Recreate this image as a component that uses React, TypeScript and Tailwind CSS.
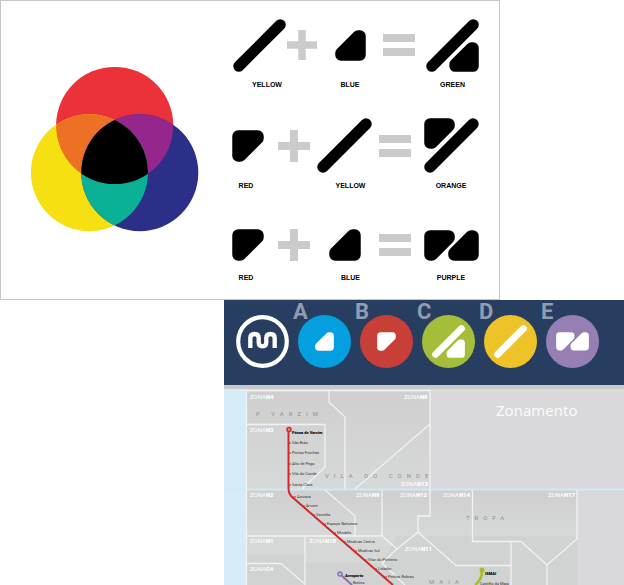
import React from "react";

type Shape = "slash" | "lower" | "upper" | "green" | "orange" | "purple";

const UPPER = "M6 6 H25 V8 L8 25 H6 Z";
const LOWER = "M25 25 V6 H23 L6 23 V25 Z";
const SLASH = "M6 49 L49 6";

const GLYPHS: Record<Shape, { w: number; h: number; parts: { d: string; t?: string }[] }> = {
  slash: { w: 55, h: 55, parts: [{ d: SLASH }] },
  lower: { w: 31, h: 31, parts: [{ d: LOWER }] },
  upper: { w: 31, h: 31, parts: [{ d: UPPER }] },
  green: { w: 55, h: 55, parts: [{ d: SLASH }, { d: LOWER, t: "translate(24 24)" }] },
  orange: { w: 55, h: 55, parts: [{ d: UPPER }, { d: SLASH }] },
  purple: { w: 55, h: 31, parts: [{ d: UPPER }, { d: LOWER, t: "translate(24 0)" }] },
};

function Glyph({ shape, className }: { shape: Shape; className: string }) {
  const g = GLYPHS[shape];
  return (
    <svg viewBox={`0 0 ${g.w} ${g.h}`} className={className} aria-hidden="true">
      {g.parts.map((p, i) => (
        <path
          key={i}
          d={p.d}
          transform={p.t}
          fill="currentColor"
          stroke="currentColor"
          strokeWidth="11.5"
          strokeLinejoin="round"
          strokeLinecap="round"
        />
      ))}
    </svg>
  );
}

function Term({
  shape,
  size,
  label,
  art,
  caption = "",
}: {
  shape: Shape;
  size: string;
  label: string;
  art: string;
  caption?: string;
}) {
  return (
    <figure className="flex flex-col items-center">
      <div className={`flex items-center ${art}`}>
        <Glyph shape={shape} className={size} />
      </div>
      <figcaption className={`text-[7px] leading-[14px] font-bold ${caption}`}>{label}</figcaption>
    </figure>
  );
}

function Plus({ art, size = "size-8" }: { art: string; size?: string }) {
  return (
    <div className={`flex items-center justify-end ${art}`}>
      <svg viewBox="0 0 32 32" className={`text-[#cbcbcb] ${size}`} aria-label="plus">
        <path d="M12 0h8v12h12v8h-12v12h-8v-12H0v-8h12z" fill="currentColor" />
      </svg>
    </div>
  );
}

function Equals({ art }: { art: string }) {
  return (
    <div className={`flex items-center justify-center ${art}`}>
      <div className="flex w-full flex-col gap-[6px]">
        <span className="h-2 bg-[#cbcbcb]" />
        <span className="h-2 bg-[#cbcbcb]" />
      </div>
    </div>
  );
}

function Venn() {
  return (
    <svg viewBox="30 66 170 168" className="w-[170px] shrink-0" role="img" aria-label="Colour mixing">
      <defs>
        <clipPath id="clip-red">
          <circle cx="114.7" cy="125.5" r="58.6" />
        </clipPath>
        <clipPath id="clip-blue">
          <circle cx="139.8" cy="172.7" r="58.5" />
        </clipPath>
      </defs>
      <circle cx="114.7" cy="125.5" r="58.6" fill="#eb3139" />
      <circle cx="89.4" cy="172.7" r="58.5" fill="#f6e011" />
      <circle cx="139.8" cy="172.7" r="58.5" fill="#2c2f88" />
      <g clipPath="url(#clip-red)">
        <circle cx="89.4" cy="172.7" r="58.5" fill="#ed7025" />
        <circle cx="139.8" cy="172.7" r="58.5" fill="#94268c" />
      </g>
      <g clipPath="url(#clip-blue)">
        <circle cx="89.4" cy="172.7" r="58.5" fill="#0ab194" />
        <g clipPath="url(#clip-red)">
          <circle cx="89.4" cy="172.7" r="58.5" fill="#000" />
        </g>
      </g>
    </svg>
  );
}

const LINES: { id: string; color: string; shape: Shape; size: string }[] = [
  { id: "A", color: "bg-[#049fdf]", shape: "lower", size: "w-[19px]" },
  { id: "B", color: "bg-[#c73f36]", shape: "upper", size: "w-[19px]" },
  { id: "C", color: "bg-[#a4be3a]", shape: "green", size: "w-[33px]" },
  { id: "D", color: "bg-[#eec229]", shape: "slash", size: "w-[33px]" },
  { id: "E", color: "bg-[#957fb3]", shape: "purple", size: "w-[33px]" },
];

const ZONES: [string, number, number][] = [
  ["N4", 250, 399],
  ["N8", 404, 399],
  ["N3", 250, 432],
  ["N13", 401, 486],
  ["N2", 250, 497],
  ["N9", 356, 497],
  ["N12", 400, 497],
  ["N14", 443, 497],
  ["N17", 548, 497],
  ["N1", 250, 543],
  ["N10", 309, 543],
  ["N11", 405, 551],
  ["C4", 250, 571],
];

const STOPS: [string, number, number][] = [
  ["São Brás", 292, 444],
  ["Portas Fronhas", 292, 454],
  ["Alto de Pega", 292, 465],
  ["Vila do Conde", 292, 475],
  ["Santa Clara", 292, 486],
  ["Azurara", 297, 498],
  ["Árvore", 306, 507],
  ["Varziela", 316, 516],
  ["Espaço Natureza", 327, 525],
  ["Mindelo", 337, 534],
  ["Modivas Centro", 347, 543],
  ["Modivas Sul", 358, 552],
  ["Vilar do Pinheiro", 368, 561],
  ["Lidador", 378, 570],
  ["Pedras Rubras", 388, 578],
];

const TOWNS: [string, number, number][] = [
  ["P VARZIM", 256, 416],
  ["VILA DO CONDE", 325, 478],
  ["TROFA", 466, 520],
  ["MAIA", 429, 584],
];

function ZoneMap() {
  return (
    <svg viewBox="224 389 400 196" className="block w-full bg-[#d9d8da]" role="img" aria-label="Zonamento">
      <defs>
        <linearGradient id="land" x1="0" y1="0" x2="0" y2="1">
          <stop offset="0" stopColor="#cecfce" />
          <stop offset="1" stopColor="#d7d8d8" />
        </linearGradient>
      </defs>
      <rect x="224" y="389" width="23" height="196" fill="#d5edf8" />
      <rect x="247" y="390" width="183" height="99" fill="url(#land)" />
      <rect x="247" y="490" width="330" height="46" fill="url(#land)" />
      <path d="M247 536H577V585H247Z" fill="#d1d2d2" />
      <path d="M247 536H305V555H247Z M305 536H397L382 563H305Z" fill="#d6d7d7" />
      <path d="M224 489.5H624" stroke="#d0eaf5" strokeWidth="2" />

      <g fill="none" stroke="#f1f3f3" strokeWidth="1.3" strokeLinejoin="round">
        <path d="M246.5 585V390.5H430V516H418V532L397 549L382 563L405 585" />
        <path d="M329 390V402L345 417V489" />
        <path d="M430 424L355 489" />
        <path d="M247 424.5H325V467L302 489" />
        <path d="M325 490L355 516V536" />
        <path d="M247 536H382L397 549" />
        <path d="M382 490V536" />
        <path d="M418 532L456 565.5H511" />
        <path d="M305 536V585" />
        <path d="M247 563.5H281L305 584" />
        <path d="M472.5 490V541.5H521L547 565V585" />
        <path d="M547 565L577 539V490" />
        <path d="M511 542V585" />
      </g>

      <g fontFamily="Roboto, sans-serif" fill="#fff" fontSize="6">
        {ZONES.map(([id, x, y]) => (
          <text key={id} x={x} y={y}>
            <tspan fontWeight="400">ZONA</tspan>
            <tspan fontWeight="900">{id}</tspan>
          </text>
        ))}
      </g>
      <g className="tracking-[5px]" fontFamily="Roboto, sans-serif" fill="#8f9192" fontSize="6">
        {TOWNS.map(([name, x, y]) => (
          <text key={name} x={x} y={y}>
            {name}
          </text>
        ))}
      </g>
      <text x="496" y="416" fontFamily="'Noto Sans', sans-serif" fontSize="15" fill="#fbfbfb">
        Zonamento
      </text>

      <path d="M288.5 431V489Q288.5 493 291 496L393 585" fill="none" stroke="#cd2c2c" strokeWidth="2" />
      <circle cx="289" cy="429.5" r="2" fill="#e58a85" stroke="#cd2c2c" strokeWidth="1.5" />
      <g stroke="#cd2c2c" strokeWidth="1">
        {STOPS.map(([name, x, y]) => (
          <path key={name} d={`M${x - 4} ${y - 1}h3`} />
        ))}
      </g>
      <path d="M340 574L352 585" stroke="#8c72b4" strokeWidth="2" />
      <circle cx="340" cy="574" r="2" fill="#c9bfdb" stroke="#8c72b4" strokeWidth="1.5" />
      <path d="M482 571Q482 580 475 585" fill="none" stroke="#a3c021" strokeWidth="2.5" />
      <circle cx="482" cy="570" r="2.5" fill="#a3c021" />

      <g fontFamily="Roboto, sans-serif" fill="#333" fontSize="4">
        {STOPS.map(([name, x, y]) => (
          <text key={name} x={x} y={y}>
            {name}
          </text>
        ))}
        <text x="353" y="584">Botica</text>
        <text x="480" y="585">Castêlo da Maia</text>
      </g>
      <g fontFamily="Roboto, sans-serif" fill="#000" fontSize="4" fontWeight="900">
        <text x="292" y="434">Póvoa de Varzim</text>
        <text x="345" y="577">Aeroporto</text>
        <text x="485" y="575">ISMAI</text>
      </g>
    </svg>
  );
}

export default function App() {
  return (
    <main className="bg-white font-['Liberation_Sans',Arial,sans-serif] text-black">
      <section className="flex w-full max-w-[500px] items-center gap-8 border border-[#c6c6c6] pl-[29px]">
        <Venn />
        <div className="flex flex-col pt-[17px] pb-[14px]">
          <div className="grid grid-cols-[54px_31px_66px_32px_75px]">
            <Term shape="slash" size="w-[53px]" label="YELLOW" art="h-[54px] mb-[6px]" caption="pl-4" />
            <Plus art="h-[54px]" size="size-[30px]" />
            <Term shape="lower" size="w-[31px]" label="BLUE" art="h-[54px] mb-[6px]" />
            <Equals art="h-[54px]" />
            <Term shape="green" size="w-[53px]" label="GREEN" art="h-[54px] mb-[6px]" />
          </div>
          <div className="mt-[26px] grid grid-cols-[32px_46px_69px_32px_80px]">
            <Term shape="upper" size="w-[32px]" label="RED" art="h-[55px] mb-[6px]" caption="pr-1" />
            <Plus art="h-[55px]" />
            <Term shape="slash" size="w-[55px]" label="YELLOW" art="h-[55px] mb-[6px]" caption="pl-3" />
            <Equals art="h-[55px]" />
            <Term shape="orange" size="w-[55px]" label="ORANGE" art="h-[55px] mb-[6px]" />
          </div>
          <div className="mt-[36px] grid grid-cols-[32px_46px_69px_32px_80px]">
            <Term shape="upper" size="w-[32px]" label="RED" art="h-[32px] mb-[10px]" caption="pr-1" />
            <Plus art="h-[32px]" />
            <Term shape="lower" size="w-[32px]" label="BLUE" art="h-[32px] mb-[10px]" caption="pl-3" />
            <Equals art="h-[32px]" />
            <Term shape="purple" size="w-[55px]" label="PURPLE" art="h-[32px] mb-[10px]" />
          </div>
        </div>
      </section>

      <section className="ml-[224px]">
        <header className="flex gap-[9px] bg-[#283e60] pt-[15px] pb-[17px] pl-3">
          <svg viewBox="0 0 53 53" className="size-[53px]" role="img" aria-label="Metro">
            <circle cx="26.5" cy="26.5" r="24.3" fill="none" stroke="#fff" strokeWidth="4.2" />
            <path
              d="M14.3 33V23Q14.3 19 18.7 19Q22.7 19 22.7 23V27.5Q22.7 31.3 26.5 31.3Q30.3 31.3 30.3 27.5V23Q30.3 19 34.5 19Q38.7 19 38.7 23V33"
              fill="none"
              stroke="#fff"
              strokeWidth="4.3"
            />
          </svg>
          {LINES.map((l) => (
            <div key={l.id} className={`relative flex size-[53px] items-center justify-center rounded-full text-white ${l.color}`}>
              <Glyph shape={l.shape} className={l.size} />
              <span className="absolute -top-[13px] -left-[5px] font-[Roboto,sans-serif] text-[22px] leading-5 font-bold text-[#8f9cb1]">
                {l.id}
              </span>
            </div>
          ))}
        </header>
        <div className="h-1 bg-[#c9c8c8]" />
        <ZoneMap />
      </section>
    </main>
  );
}
